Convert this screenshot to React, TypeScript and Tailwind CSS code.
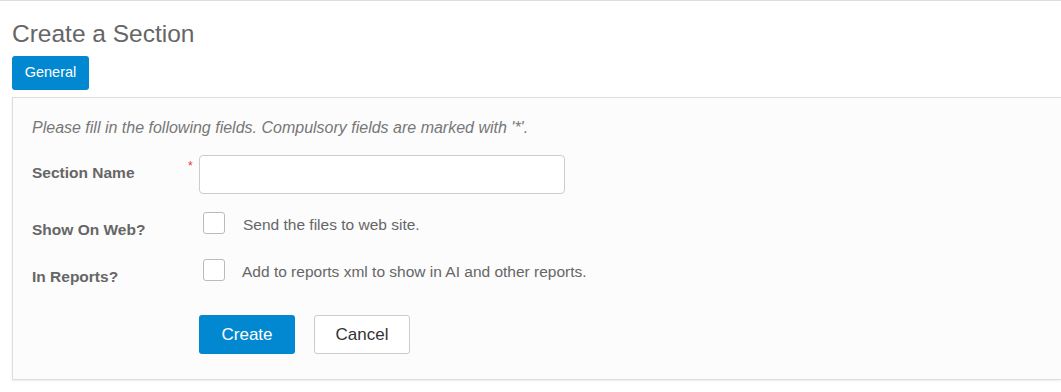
export default function App() {
  return (
    <div className="min-h-[392px] border-t border-[#dddddd] bg-white font-['Liberation_Sans',Arial,sans-serif]">
      <div className="pl-3">
        <h1 className="pt-[17px] text-[24.5px] leading-[32px] text-[#666666]">Create a Section</h1>
        <div className="mt-[6px] flex">
          <button className="h-[34px] w-[77px] rounded-[3px] bg-[#0288d1] text-[14.5px] text-white">General</button>
        </div>
        <div className="mt-[7px] border-t border-b border-l border-[#dddddd] bg-[#fcfcfc] pb-[25px] pl-[19px] pt-[20px] shadow-[0_1px_2px_rgba(0,0,0,0.08)]">
          <p className="text-[16px] italic leading-[20px] text-[#777777]">
            Please fill in the following fields. Compulsory fields are marked with '*'.
          </p>

          <div className="mt-[17px] flex">
            <label className="w-[156px] pt-[8px] text-[15.5px] font-bold leading-[20px] text-[#666666]">Section Name</label>
            <span className="w-[11px] pt-[5px] text-[12px] leading-[12px] text-[#e33]">*</span>
            <input type="text" className="h-[39px] w-[366px] rounded-[4px] border border-[#cccccc] bg-white" />
          </div>

          <div className="mt-[18px] flex">
            <label className="w-[167px] pt-[8px] text-[15.5px] font-bold leading-[20px] text-[#666666]">Show On Web?</label>
            <span className="ml-[4px] h-[22px] w-[22px] rounded-[3px] border border-[#bbbbbb] bg-white" />
            <span className="ml-[18px] pt-[3px] text-[15.5px] leading-[20px] text-[#666666]">Send the files to web site.</span>
          </div>

          <div className="mt-[19px] flex">
            <label className="w-[167px] pt-[8px] text-[15.5px] font-bold leading-[20px] text-[#666666]">In Reports?</label>
            <span className="ml-[4px] h-[22px] w-[22px] rounded-[3px] border border-[#bbbbbb] bg-white" />
            <span className="ml-[17px] pt-[3px] text-[15.5px] leading-[20px] text-[#666666]">
              Add to reports xml to show in AI and other reports.
            </span>
          </div>

          <div className="mt-[28px] flex gap-[19px] pl-[167px]">
            <button className="h-[39px] w-[96px] rounded-[3px] bg-[#0288d1] text-[17px] text-white">Create</button>
            <button className="h-[39px] w-[96px] rounded-[3px] border border-[#cccccc] bg-white text-[17px] text-[#333333]">
              Cancel
            </button>
          </div>
        </div>
      </div>
    </div>
  );
}
